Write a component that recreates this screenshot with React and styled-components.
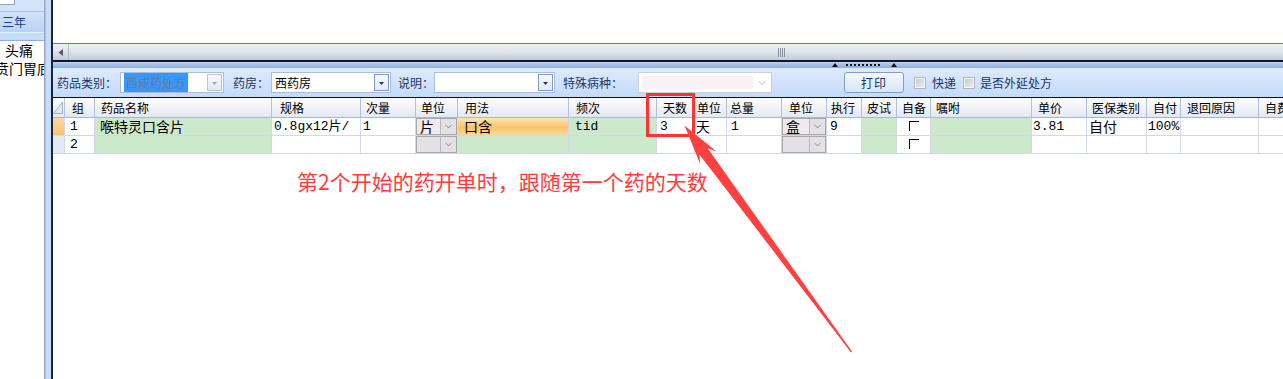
import React from "react";
import styled, { createGlobalStyle } from "styled-components";
import { ChevronDown } from "lucide-react";

const CJK = `"Noto Sans CJK SC", "Liberation Sans", sans-serif`;
const MONO = `"Liberation Mono", "Noto Sans CJK SC", monospace`;

const GlobalStyle = createGlobalStyle`
  html, body { margin: 0; padding: 0; background: #fff; }
  body { font-family: ${CJK}; }
`;

const Screen = styled.div`
  position: relative;
  width: 1283px;
  height: 379px;
  overflow: hidden;
  display: flex;
  background: #fff;
`;

/* ---- left tree panel ---- */
const LeftPanel = styled.div`
  width: 44px;
  flex: none;
  display: flex;
  flex-direction: column;
  border-right: 1px solid #9aa8c4;
  overflow: hidden;
  background: #fff;
`;
const TopStrip = styled.div`
  height: 12px;
  box-sizing: border-box;
  background: #d4e4f9;
  border-bottom: 1px solid #a9c3e8;
`;
const MiniBox = styled.div`
  width: 15px;
  height: 5px;
  box-sizing: border-box;
  background: #fff;
  border-right: 1px solid #8aa5cc;
  border-bottom: 1px solid #8aa5cc;
`;
const TabBar = styled.div`
  height: 20px;
  box-sizing: border-box;
  background: linear-gradient(#d3e4fa, #b8d1f4);
  color: #15428b;
  font-size: 12px;
  line-height: 20px;
  padding-left: 2px;
`;
const SubStrip = styled.div`
  height: 9px;
  box-sizing: border-box;
  border-top: 1px solid #e6effc;
  border-bottom: 1px solid #8fb0df;
  background: #c7dcf8;
`;
const ListItem = styled.div`
  font-size: 14px;
  line-height: 18px;
  white-space: nowrap;
  margin-left: ${p => p.$indent}px;
  color: #000;
`;
const Splitter = styled.div`
  width: 6px;
  flex: none;
  background: linear-gradient(90deg, #aebfdc 0 1px, #c6dcf9 1px);
  border-right: 2px solid #1d2330;
`;

/* ---- main area ---- */
const Main = styled.div`
  flex: 1;
  min-width: 0;
  display: flex;
  flex-direction: column;
  overflow: hidden;
`;
const TopBlank = styled.div`
  height: 43px;
  flex: none;
  background: #fff;
`;
const HScroll = styled.div`
  height: 17px;
  flex: none;
  box-sizing: border-box;
  border-top: 1px solid #6a7aa2;
  background: linear-gradient(#eef0f5, #e0e4ec 45%, #c3cad8);
  display: flex;
`;
const ScrollBtn = styled.div`
  width: 15px;
  border-right: 1px solid #b4bdcf;
  display: flex;
  align-items: center;
  justify-content: center;
`;
const Thumb = styled.div`
  flex: 1;
  display: flex;
  align-items: center;
  padding-left: 709px;
`;
const Grip = styled.div`
  width: 8px;
  height: 9px;
  background: repeating-linear-gradient(90deg, #8a91a2 0 1px, transparent 1px 2px);
`;
const DarkRule = styled.div`
  height: 2px;
  flex: none;
  background: #121a28;
`;
const SplitStrip = styled.div`
  height: 6px;
  flex: none;
  background: linear-gradient(#bad2f3, #8daede);
  display: flex;
  align-items: center;
  padding-left: 779px;
`;
const Dots = styled.div`
  width: 34px;
  height: 2px;
  margin: 0 11px 0 8px;
  background: repeating-linear-gradient(90deg, #161616 0 2px, transparent 2px 4px);
`;

const Toolbar = styled.div`
  height: 30px;
  flex: none;
  box-sizing: border-box;
  border-bottom: 1px solid #111;
  background: linear-gradient(#dfeafc, #c3dbfa);
  display: flex;
  align-items: center;
  padding-left: 4px;
  font-size: 12px;
`;
const Label = styled.span`
  margin-left: ${p => p.$ml || 0}px;
  color: #1c3563;
  white-space: nowrap;
  line-height: 14px;
`;
const Combo = styled.div`
  margin-left: ${p => p.$ml || 0}px;
  width: ${p => p.$w}px;
  height: 21px;
  box-sizing: border-box;
  border: 1px solid ${p => (p.$disabled ? "#c9d0db" : "#a9bedc")};
  background: #fff;
  display: flex;
  align-items: center;
`;
const ComboText = styled.div`
  flex: 1;
  padding-left: 3px;
  font-size: 12px;
  color: #000;
  white-space: nowrap;
`;
const Selected = styled.span`
  background: #3399ff;
  color: #6e7b8d;
  padding: 1px 2px;
`;
const DropBtn = styled.div`
  width: 15px;
  height: 17px;
  margin-right: 1px;
  box-sizing: border-box;
  border: 1px solid ${p => (p.$off ? "#b9c2d0" : "#7d9acb")};
  background: linear-gradient(#f7f9fd, #e1e9f5);
  display: flex;
  align-items: center;
  justify-content: center;
  padding-top: 2px;
`;
const DisabledField = styled.div`
  flex: 1;
  align-self: stretch;
  margin: 3px 0 3px 3px;
  background: #f8f2f6;
`;
const ChevronBox = styled.div`
  width: 18px;
  display: flex;
  align-items: center;
  justify-content: center;
`;
const PrintButton = styled.div`
  margin-left: 72px;
  width: 60px;
  height: 21px;
  box-sizing: border-box;
  border: 1px solid #7f9fc4;
  border-radius: 3px;
  background: linear-gradient(#f3f8fe, #d5e6fa);
  color: #15325f;
  font-size: 12px;
  display: flex;
  align-items: center;
  justify-content: center;
  letter-spacing: 1px;
`;
const Check = styled.span`
  margin-left: ${p => p.$ml}px;
  width: 12px;
  height: 12px;
  box-sizing: border-box;
  border: 1px solid #b3b8c0;
  background: linear-gradient(135deg, #c4c7cc, #eef0f3);
  box-shadow: inset 0 0 0 1px #f5f6f8;
  flex: none;
`;

/* ---- grid ---- */
const Grid = styled.div`
  display: grid;
  grid-template-columns: ${p => p.$cols};
  flex: none;
  background: #fff;
`;
const HeadCell = styled.div`
  height: 20px;
  box-sizing: border-box;
  border-right: 1px solid #b3c0d6;
  border-bottom: 1px solid #a7b6cf;
  background: linear-gradient(#fdfdfe, #e4e8f0);
  font-size: 12px;
  line-height: 19px;
  padding-left: ${p => p.$pad}px;
  white-space: nowrap;
  color: #000;
`;
const tones = {
  white: "#fff",
  green: "#cde9cc",
  orange: "linear-gradient(#fee5b8, #fbc26a 55%, #fdd79a)",
  ind1: "linear-gradient(#fbd9a2, #f7c273)",
  ind2: "#e3eaf5",
};
const BodyCell = styled.div`
  height: 18px;
  box-sizing: border-box;
  border-right: 1px solid #d3d8e7;
  border-bottom: 1px solid #d3d8e7;
  background: ${p => tones[p.$tone || "white"]};
  font-family: ${p => (p.$mono ? MONO : CJK)};
  font-size: ${p => (p.$mono ? 13 : 14)}px;
  line-height: 17px;
  padding-left: ${p => p.$pad || 0}px;
  white-space: nowrap;
  color: #000;
`;
const CellCombo = styled.div`
  height: 100%;
  box-sizing: border-box;
  border: 1px solid #a8a8a8;
  display: flex;
  background: #e4e0e4;
`;
const CellComboValue = styled.div`
  flex: 1;
  padding-left: 3px;
  font-size: 14px;
  line-height: 15px;
  background: ${p => (p.$filled ? "#eeebef" : "transparent")};
`;
const CellComboArrow = styled.div`
  width: 15px;
  border-left: 1px solid #b8b8b8;
  display: flex;
  align-items: center;
  justify-content: center;
`;
const CheckMark = styled.div`
  width: 10px;
  height: 10px;
  margin: 3px 0 0 12px;
  box-sizing: border-box;
  border-top: 1px solid #000;
  border-left: 1px solid #000;
`;

const Note = styled.div`
  margin-top: 15px;
  padding-left: 244px;
  color: #ff3b3b;
  font-size: 21px;
  line-height: 24px;
  white-space: nowrap;
`;
const Overlay = styled.svg`
  position: absolute;
  left: 0;
  top: 0;
  pointer-events: none;
`;

const cols = [
  { w: 12, h: "", p: 0 },
  { w: 30, h: "组", p: 7 },
  { w: 177, h: "药品名称", p: 6 },
  { w: 89, h: "规格", p: 8 },
  { w: 55, h: "次量", p: 5 },
  { w: 42, h: "单位", p: 5 },
  { w: 111, h: "用法", p: 7 },
  { w: 88, h: "频次", p: 7 },
  { w: 38, h: "天数", p: 6 },
  { w: 32, h: "单位", p: 2 },
  { w: 55, h: "总量", p: 3 },
  { w: 45, h: "单位", p: 7 },
  { w: 35, h: "执行", p: 4 },
  { w: 35, h: "皮试", p: 5 },
  { w: 34, h: "自备", p: 5 },
  { w: 101, h: "嘱咐", p: 5 },
  { w: 55, h: "单价", p: 6 },
  { w: 60, h: "医保类别", p: 5 },
  { w: 34, h: "自付", p: 6 },
  { w: 78, h: "退回原因", p: 6 },
  { w: 80, h: "自费", p: 6 },
];

const rows = [
  [
    { tone: "ind1" },
    { t: "1", mono: true, p: 5 },
    { t: "喉特灵口含片", tone: "green", p: 5 },
    { t: "0.8gx12片/", mono: true, p: 2 },
    { t: "1", mono: true, p: 2 },
    { combo: "片" },
    { t: "口含", tone: "orange", p: 6 },
    { t: "tid", mono: true, tone: "green", p: 6 },
    { t: "3", mono: true, p: 3 },
    { t: "天", p: 1 },
    { t: "1", mono: true, p: 4 },
    { combo: "盒" },
    { t: "9", mono: true, p: 3 },
    { tone: "green" },
    { check: true },
    { tone: "green" },
    { t: "3.81", mono: true, p: 1 },
    { t: "自付", p: 2 },
    { t: "100%", mono: true, p: 1 },
    {},
    {},
  ],
  [
    { tone: "ind2" },
    { t: "2", mono: true, p: 5 },
    { tone: "green" },
    {},
    {},
    { combo: "" },
    { tone: "green" },
    { tone: "green" },
    {},
    {},
    {},
    { combo: "" },
    {},
    { tone: "green" },
    { check: true },
    { tone: "green" },
    {},
    {},
    {},
    {},
    {},
  ],
];

const DownTri = ({ color }) => (
  <svg width="5" height="3">
    <polygon points="0,0 5,0 2.5,3" fill={color} />
  </svg>
);
const UpTri = () => (
  <svg width="6" height="4">
    <polygon points="3,0 6,4 0,4" fill="#111" />
  </svg>
);

const renderCell = (c, key) => {
  if (c.combo !== undefined) {
    return (
      <BodyCell key={key}>
        <CellCombo>
          <CellComboValue $filled={!!c.combo}>{c.combo}</CellComboValue>
          <CellComboArrow>
            <ChevronDown size={11} strokeWidth={1.5} color="#666" />
          </CellComboArrow>
        </CellCombo>
      </BodyCell>
    );
  }
  return (
    <BodyCell key={key} $tone={c.tone} $mono={c.mono} $pad={c.p}>
      {c.check ? <CheckMark /> : c.t}
    </BodyCell>
  );
};

export default function App() {
  return (
    <>
      <GlobalStyle />
      <Screen>
        <LeftPanel>
          <TopStrip>
            <MiniBox />
          </TopStrip>
          <TabBar>三年</TabBar>
          <SubStrip />
          <ListItem $indent={5}>头痛</ListItem>
          <ListItem $indent={-5}>贲门胃底</ListItem>
        </LeftPanel>
        <Splitter />
        <Main>
          <TopBlank />
          <HScroll>
            <ScrollBtn>
              <svg width="5" height="7">
                <polygon points="5,0 5,7 0.5,3.5" fill="#525a6a" />
              </svg>
            </ScrollBtn>
            <Thumb>
              <Grip />
            </Thumb>
          </HScroll>
          <DarkRule />
          <SplitStrip>
            <UpTri />
            <Dots />
            <UpTri />
          </SplitStrip>
          <Toolbar>
            <Label>药品类别：</Label>
            <Combo $ml={3} $w={104}>
              <ComboText>
                <Selected>西成药处方</Selected>
              </ComboText>
              <DropBtn $off>
                <DownTri color="#a3a7ae" />
              </DropBtn>
            </Combo>
            <Label $ml={9}>药房：</Label>
            <Combo $ml={2} $w={120}>
              <ComboText>西药房</ComboText>
              <DropBtn>
                <DownTri color="#1c3563" />
              </DropBtn>
            </Combo>
            <Label $ml={7}>说明：</Label>
            <Combo $ml={0} $w={121}>
              <ComboText />
              <DropBtn>
                <DownTri color="#1c3563" />
              </DropBtn>
            </Combo>
            <Label $ml={8}>特殊病种：</Label>
            <Combo $ml={15} $w={134} $disabled>
              <DisabledField />
              <ChevronBox>
                <ChevronDown size={12} strokeWidth={1.5} color="#a8a8a8" />
              </ChevronBox>
            </Combo>
            <PrintButton>打印</PrintButton>
            <Check $ml={10} />
            <Label $ml={6}>快递</Label>
            <Check $ml={7} />
            <Label $ml={5}>是否外延处方</Label>
          </Toolbar>
          <Grid $cols={cols.map(c => c.w + "px").join(" ")}>
            {cols.map((c, i) => (
              <HeadCell key={"h" + i} $pad={c.p}>
                {i === 0 ? (
                  <svg width="10" height="14" style={{ marginTop: 3 }}>
                    <polygon points="9.5,1 9.5,12.5 0.5,12.5" fill="#e3e9f4" stroke="#a3b2ca" />
                  </svg>
                ) : (
                  c.h
                )}
              </HeadCell>
            ))}
            {rows.map((r, ri) => r.map((c, ci) => renderCell(c, ri + "-" + ci)))}
          </Grid>
          <Note>第2个开始的药开单时，跟随第一个药的天数</Note>
        </Main>
        <Overlay width="1283" height="379">
          <rect x="647.5" y="94.5" width="46" height="41" fill="none" stroke="#f33" strokeWidth="3" />
          <polygon
            points="684.5,125.5 716.5,151.6 707.6,148.2 852,351.6 851,352.4 699.4,154.4 700.2,164"
            fill="#ff4040"
          />
        </Overlay>
      </Screen>
    </>
  );
}
